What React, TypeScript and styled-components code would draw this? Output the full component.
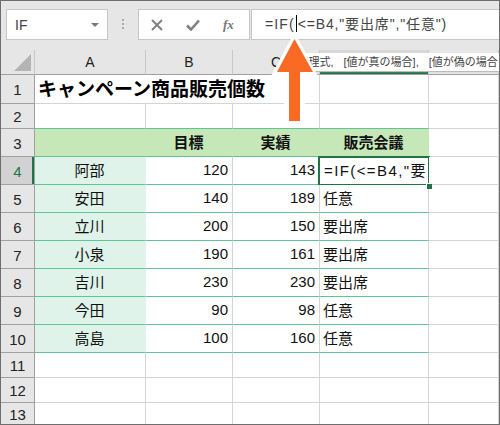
import React from 'react';
import styled, { createGlobalStyle } from 'styled-components';

const GlobalStyle = createGlobalStyle`
  html, body {
    margin: 0;
    padding: 0;
    background: #fff;
  }
  * {
    box-sizing: border-box;
  }
`;

const FONT = `"Liberation Sans", "Noto Sans CJK JP", sans-serif`;
const GRID_LINE = '#d4d4d4';
const GREEN_LINE = '#5fc693';
const EXCEL_GREEN = '#217346';

const Page = styled.div`
  position: relative;
  width: 500px;
  height: 425px;
  overflow: hidden;
  font-family: ${FONT};
  color: #111;
  border: 1px solid #6e6e6e;
`;

const FormulaBar = styled.div`
  display: flex;
  align-items: flex-start;
  height: 49px;
  padding: 8px 0 0 5px;
  background: #e6e6e6;
`;

const NameBox = styled.div`
  display: flex;
  align-items: center;
  justify-content: space-between;
  width: 102px;
  height: 31px;
  padding: 0 8px;
  background: #fff;
  border: 1px solid #c6c6c6;
  font-size: 14px;
  color: #444;
`;

const Caret = styled.span`
  width: 0;
  height: 0;
  border-left: 4px solid transparent;
  border-right: 4px solid transparent;
  border-top: 4px solid #777;
`;

const Grip = styled.div`
  width: 2px;
  height: 10px;
  margin: 10px 14px 0 14px;
  background: repeating-linear-gradient(to bottom, #aaa 0 2px, transparent 2px 4px);
`;

const ButtonBox = styled.div`
  display: flex;
  align-items: center;
  gap: 23px;
  width: 112px;
  height: 31px;
  padding-left: 12px;
  background: #fff;
  border: 1px solid #c6c6c6;
`;

const FxLabel = styled.span`
  font-family: "Liberation Serif", serif;
  font-style: italic;
  font-size: 13px;
  font-weight: bold;
  color: #777;
`;

const FormulaInput = styled.div`
  flex: 1;
  height: 31px;
  margin-left: 1px;
  padding-left: 13px;
  background: #fff;
  border: 1px solid #c6c6c6;
  border-right: none;
  font-size: 14px;
  line-height: 28px;
  letter-spacing: 0.85px;
  color: #444;
  white-space: nowrap;
`;

const FormulaHead = styled.span`
  letter-spacing: 1.1px;
`;

const TextCursor = styled.span`
  display: inline-block;
  width: 1px;
  height: 17px;
  margin: 0 1px;
  vertical-align: -3px;
  background: #000;
`;

const Sheet = styled.div`
  display: grid;
  grid-template-columns: 34px 111px 87px 87px 109px 70px;
  grid-template-rows: 25px 29px 25px 28px repeat(7, 28px) 25px 25px 22px;
`;

const ColumnHead = styled.div<{ $active?: boolean }>`
  display: flex;
  align-items: center;
  justify-content: center;
  background: ${({ $active }) => ($active ? '#d8d8d8' : '#e6e6e6')};
  border-right: 1px solid #c8c8c8;
  border-bottom: 1px solid #a0a0a0;
  font-size: 14px;
  color: #222;
  ${({ $active }) => $active && `box-shadow: inset 0 -2px 0 ${EXCEL_GREEN};`}
`;

const Corner = styled(ColumnHead)`
  justify-content: flex-end;
  align-items: flex-end;
  padding: 0 3px 3px 0;
`;

const RowHead = styled.div<{ $active?: boolean }>`
  display: flex;
  align-items: center;
  justify-content: center;
  padding-top: 1px;
  background: ${({ $active }) => ($active ? '#d2d2d2' : '#e6e6e6')};
  border-right: 1px solid #a0a0a0;
  border-bottom: 1px solid #a0a0a0;
  font-size: 15px;
  color: ${({ $active }) => ($active ? EXCEL_GREEN : '#222')};
  ${({ $active }) => $active && `box-shadow: inset -2px 0 0 ${EXCEL_GREEN};`}
`;

const Cell = styled.div<{ $align?: string; $bg?: string; $green?: boolean }>`
  position: relative;
  display: flex;
  align-items: center;
  justify-content: ${({ $align }) => $align || 'flex-start'};
  min-width: 0;
  padding: 0 4px 3px 3px;
  background: ${({ $bg }) => $bg || '#fff'};
  border-right: 1px solid ${({ $bg }) => ($bg ? 'transparent' : GRID_LINE)};
  border-bottom: 1px solid ${({ $green }) => ($green ? GREEN_LINE : GRID_LINE)};
  font-size: 15px;
  white-space: nowrap;
`;

const TitleCell = styled(Cell)`
  grid-column: span 3;
`;

const TitleText = styled.span`
  font-size: 19px;
  font-weight: bold;
  color: #000;
`;

const HeaderText = styled.span`
  font-size: 15px;
  font-weight: bold;
`;

const ActiveCell = styled(Cell)`
  padding-left: 4px;
  letter-spacing: 1.4px;
  &::after {
    content: '';
    position: absolute;
    inset: -1px -2px -2px -2px;
    border: 2px solid ${EXCEL_GREEN};
    pointer-events: none;
  }
`;

const FillHandle = styled.span`
  position: absolute;
  right: -4px;
  bottom: -5px;
  z-index: 1;
  width: 6px;
  height: 6px;
  background: ${EXCEL_GREEN};
  border: 1px solid #fff;
  border-width: 1px 0 0 1px;
`;

const HintTip = styled.div`
  position: absolute;
  top: 52px;
  left: 282px;
  z-index: 2;
  width: 216px;
  height: 18px;
  padding-left: 1px;
  background: #fff;
  box-shadow: 0 1px 1px #bbb;
  font-size: 11px;
  line-height: 18px;
  word-spacing: 7px;
  color: #444;
  white-space: nowrap;
`;

const ArrowMark = styled.svg`
  position: absolute;
  top: 28px;
  left: 265px;
  z-index: 3;
`;

const rows = [
  { no: 4, name: '阿部', target: 120, actual: 143, result: '' },
  { no: 5, name: '安田', target: 140, actual: 189, result: '任意' },
  { no: 6, name: '立川', target: 200, actual: 150, result: '要出席' },
  { no: 7, name: '小泉', target: 190, actual: 161, result: '要出席' },
  { no: 8, name: '吉川', target: 230, actual: 230, result: '要出席' },
  { no: 9, name: '今田', target: 90, actual: 98, result: '任意' },
  { no: 10, name: '高島', target: 100, actual: 160, result: '任意' },
];

const NAME_GREEN = '#dff3ea';
const HEADER_GREEN = '#c6e7b8';

export default function App() {
  return (
    <Page>
      <GlobalStyle />
      <FormulaBar>
        <NameBox>
          IF
          <Caret />
        </NameBox>
        <Grip />
        <ButtonBox>
          <svg width="12" height="12" viewBox="0 0 12 12">
            <path d="M1 1 L11 11 M11 1 L1 11" stroke="#808080" strokeWidth="2" fill="none" />
          </svg>
          <svg width="14" height="12" viewBox="0 0 14 12">
            <path d="M1 6.5 L5 10.5 L13 1.5" stroke="#808080" strokeWidth="2.6" fill="none" />
          </svg>
          <FxLabel>fx</FxLabel>
        </ButtonBox>
        <FormulaInput>
          <FormulaHead>=IF(</FormulaHead>
          <TextCursor />
          &lt;=B4,"要出席","任意")
        </FormulaInput>
      </FormulaBar>

      <Sheet>
        <Corner>
          <svg width="17" height="17" viewBox="0 0 17 17">
            <path d="M17 0 L17 17 L0 17 Z" fill="#b4b4b4" />
          </svg>
        </Corner>
        <ColumnHead>A</ColumnHead>
        <ColumnHead>B</ColumnHead>
        <ColumnHead>C</ColumnHead>
        <ColumnHead $active />
        <ColumnHead />

        <RowHead>1</RowHead>
        <TitleCell>
          <TitleText>キャンペーン商品販売個数</TitleText>
        </TitleCell>
        <Cell />
        <Cell />

        <RowHead>2</RowHead>
        <Cell $green />
        <Cell $green />
        <Cell $green />
        <Cell $green />
        <Cell />

        <RowHead>3</RowHead>
        <Cell $bg={HEADER_GREEN} $green />
        <Cell $bg={HEADER_GREEN} $green $align="center">
          <HeaderText>目標</HeaderText>
        </Cell>
        <Cell $bg={HEADER_GREEN} $green $align="center">
          <HeaderText>実績</HeaderText>
        </Cell>
        <Cell $bg={HEADER_GREEN} $green $align="center">
          <HeaderText>販売会議</HeaderText>
        </Cell>
        <Cell />

        {rows.map((row) => (
          <React.Fragment key={row.no}>
            <RowHead $active={row.no === 4}>{row.no}</RowHead>
            <Cell $bg={NAME_GREEN} $green $align="center">
              {row.name}
            </Cell>
            <Cell $green $align="flex-end">
              {row.target}
            </Cell>
            <Cell $green $align="flex-end">
              {row.actual}
            </Cell>
            {row.no === 4 ? (
              <ActiveCell $green>
                =IF(&lt;=B4,"要
                <FillHandle />
              </ActiveCell>
            ) : (
              <Cell $green>{row.result}</Cell>
            )}
            <Cell />
          </React.Fragment>
        ))}

        {[11, 12, 13].map((no) => (
          <React.Fragment key={no}>
            <RowHead>{no}</RowHead>
            <Cell />
            <Cell />
            <Cell />
            <Cell />
            <Cell />
          </React.Fragment>
        ))}
      </Sheet>

      <HintTip>IF(論理式, [値が真の場合], [値が偽の場合</HintTip>

      <ArrowMark width="58" height="100" viewBox="0 0 58 100">
        <path d="M28.5 3 L52 47 L39 47 L39 97 L18 97 L18 47 L5 47 Z" fill="#fff" />
        <path d="M28.5 10 L47 43 L34 43 L34 92 L23 92 L23 43 L11 43 Z" fill="#f96a25" />
      </ArrowMark>
    </Page>
  );
}
